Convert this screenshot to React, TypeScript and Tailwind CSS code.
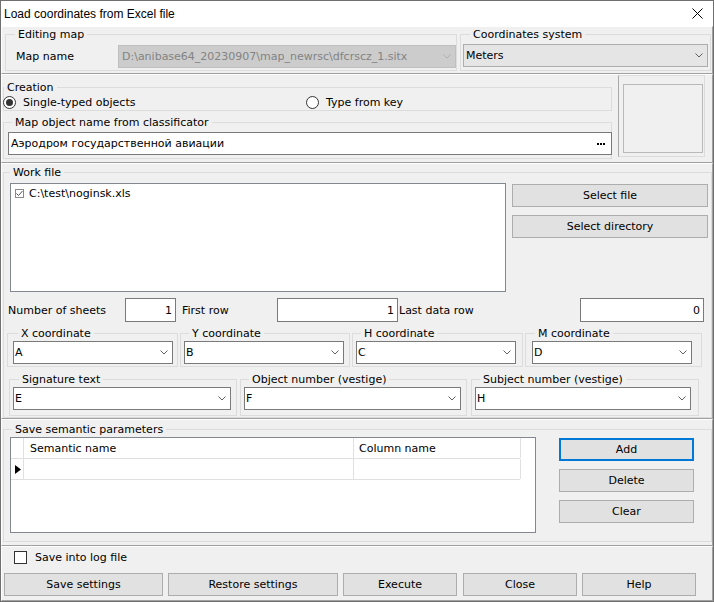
import React from "react";

const PANEL =
  "border border-t-white border-l-white border-r-[#a0a0a0] border-b-[#a0a0a0] shrink-0";

function Chevron({ color = "#606060" }: { color?: string }) {
  return (
    <svg width="8" height="5" viewBox="0 0 8 5" className="shrink-0">
      <polyline points="0.5,0.5 4,4 7.5,0.5" fill="none" stroke={color} strokeWidth="1" />
    </svg>
  );
}

function Group({
  className,
  label,
  labelPos,
  children,
}: {
  className: string;
  label?: string;
  labelPos?: string;
  children?: React.ReactNode;
}) {
  return (
    <div className={`relative border border-[#dcdcdc] shrink-0 ${className}`}>
      {label && (
        <span
          className={`absolute top-[-7px] ${labelPos} bg-[#f0f0f0] px-[3px] leading-[13px] whitespace-nowrap`}
        >
          {label}
        </span>
      )}
      {children}
    </div>
  );
}

function Combo({
  className,
  text,
  variant = "edit",
}: {
  className: string;
  text: string;
  variant?: "edit" | "readonly" | "disabled";
}) {
  const look =
    variant === "disabled"
      ? "bg-[#cccccc] border-[#bfbfbf] text-[#838383] pl-[3px]"
      : variant === "readonly"
      ? "bg-[#e5e5e5] border-[#adadad] text-black pl-[2px]"
      : "bg-white border-[#7a7a7a] text-black pl-[1px]";
  return (
    <div className={`flex items-center justify-between border pr-[4px] shrink-0 ${look} ${className}`}>
      <span className="whitespace-nowrap">{text}</span>
      <Chevron color={variant === "disabled" ? "#b0b0b0" : "#606060"} />
    </div>
  );
}

function Btn({
  className,
  children,
  focused,
}: {
  className: string;
  children: React.ReactNode;
  focused?: boolean;
}) {
  return (
    <div
      className={`flex items-center justify-center h-[23px] bg-[#e1e1e1] shrink-0 ${
        focused ? "border-2 border-[#0078d7]" : "border border-[#adadad]"
      } ${className}`}
    >
      {children}
    </div>
  );
}

function NumEdit({ className, value }: { className: string; value: string }) {
  return (
    <div
      className={`flex items-center justify-end h-[24px] bg-white border border-[#7a7a7a] pr-[3px] shrink-0 ${className}`}
    >
      {value}
    </div>
  );
}

function Radio({ checked }: { checked?: boolean }) {
  return (
    <span className="w-[13px] h-[13px] rounded-full border border-[#333333] bg-white flex items-center justify-center shrink-0">
      {checked && <span className="w-[7px] h-[7px] rounded-full bg-[#333333]" />}
    </span>
  );
}

export default function App() {
  return (
    <div className="w-[714px] h-[602px] border border-[#707070] bg-[#f0f0f0] flex flex-col text-[11px] leading-[13px] text-black [font-family:'DejaVu_Sans',sans-serif] overflow-hidden">
      {/* Title bar */}
      <div className="h-[25px] bg-white flex items-center justify-between pl-[3px] pr-[10px] shrink-0">
        <span className="[font-family:'Liberation_Sans',sans-serif] text-[12px] leading-[14px]">
          Load coordinates from Excel file
        </span>
        <svg width="11" height="11" viewBox="0 0 11 11">
          <path d="M0.5 0.5 L10.5 10.5 M10.5 0.5 L0.5 10.5" stroke="#000" strokeWidth="1" />
        </svg>
      </div>

      {/* Panel 1: editing map / coordinates system */}
      <div className={`${PANEL} h-[48px] flex pt-[7px] pl-[3px] gap-[3px]`}>
        <Group className="w-[452px] h-[37px] pl-[10px] pt-[10px]" label="Editing map" labelPos="left-[9px]">
          <div className="flex items-center">
            <span className="w-[102px] shrink-0">Map name</span>
            <Combo
              className="w-[338px] h-[23px]"
              variant="disabled"
              text="D:\anibase64_20230907\map_newrsc\dfcrscz_1.sitx"
            />
          </div>
        </Group>
        <Group className="w-[251px] h-[37px] pl-[2px] pt-[9px]" label="Coordinates system" labelPos="left-[9px]">
          <Combo className="w-[245px] h-[23px]" variant="readonly" text="Meters" />
        </Group>
      </div>

      {/* Panel 2: creation */}
      <div className={`${PANEL} h-[89px] flex`}>
        <div className="ml-[1px] w-[609px] flex flex-col pt-[12px] shrink-0">
          <Group className="w-[609px] h-[24px] pt-[8px]" label="Creation" labelPos="left-[0px]">
            <div className="flex items-center -ml-[1px]">
              <div className="w-[303px] flex items-center gap-[7px] shrink-0">
                <Radio checked />
                <span>Single-typed objects</span>
              </div>
              <div className="flex items-center gap-[7px]">
                <Radio />
                <span>Type from key</span>
              </div>
            </div>
          </Group>
          <Group
            className="mt-[11px] w-[609px] h-[37px] pl-[4px] pt-[9px]"
            label="Map object name from classificator"
            labelPos="left-[8px]"
          >
            <div className="w-[604px] h-[23px] bg-white border border-[#7a7a7a] flex items-center justify-between pl-[2px] pr-[6px]">
              <span>Аэродром государственной авиации</span>
              <svg width="8" height="2" viewBox="0 0 8 2">
                <rect x="0" y="0" width="2" height="2" fill="#000" />
                <rect x="3" y="0" width="2" height="2" fill="#000" />
                <rect x="6" y="0" width="2" height="2" fill="#000" />
              </svg>
            </div>
          </Group>
        </div>
        <div className="ml-[6px] w-[87px] h-[82px] border border-[#dcdcdc] border-l-[#a9a9a9] shrink-0 pl-[4px] pt-[8px]">
          <div className="w-[80px] h-[69px] border border-[#b9b9b9]" />
        </div>
      </div>

      {/* Panel 3: work file */}
      <div className={`${PANEL} h-[256px] flex flex-col`}>
        <Group className="mt-[8px] ml-[1px] w-[709px] h-[246px] flex flex-col" label="Work file" labelPos="left-[6px]">
          {/* list + buttons */}
          <div className="mt-[10px] ml-[6px] flex">
            <div className="w-[496px] h-[109px] bg-white border border-[#828790] pl-[4px] pt-[3px] shrink-0">
              <div className="flex items-center gap-[5px]">
                <span className="w-[9px] h-[9px] border border-[#8a8a8a] bg-white flex items-center justify-center shrink-0">
                  <svg width="7" height="7" viewBox="0 0 7 7">
                    <polyline points="0.5,3.5 2.5,5.5 6.5,1" fill="none" stroke="#555" strokeWidth="1" />
                  </svg>
                </span>
                <span>C:\test\noginsk.xls</span>
              </div>
            </div>
            <div className="ml-[6px] mt-[1px] flex flex-col gap-[8px]">
              <Btn className="w-[196px]">Select file</Btn>
              <Btn className="w-[196px]">Select directory</Btn>
            </div>
          </div>

          {/* numeric row */}
          <div className="mt-[6px] ml-[4px] flex items-center">
            <span className="w-[117px] shrink-0">Number of sheets</span>
            <NumEdit className="w-[51px]" value="1" />
            <span className="ml-[6px] w-[95px] shrink-0">First row</span>
            <NumEdit className="w-[121px]" value="1" />
            <span className="ml-[1px] w-[181px] shrink-0">Last data row</span>
            <NumEdit className="w-[124px]" value="0" />
          </div>

          {/* coordinate groups */}
          <div className="mt-[11px] ml-[3px] flex">
            <Group className="w-[171px] h-[34px] pt-[7px] pl-[5px]" label="X coordinate" labelPos="left-[10px]">
              <Combo className="w-[160px] h-[23px]" text="A" />
            </Group>
            <Group className="ml-[2px] w-[170px] h-[34px] pt-[7px] pl-[3px]" label="Y coordinate" labelPos="left-[8px]">
              <Combo className="w-[160px] h-[23px]" text="B" />
            </Group>
            <Group className="ml-[2px] w-[171px] h-[34px] pt-[7px] pl-[3px]" label="H coordinate" labelPos="left-[8px]">
              <Combo className="w-[160px] h-[23px]" text="C" />
            </Group>
            <Group className="ml-[2px] w-[177px] h-[34px] pt-[7px] pl-[6px]" label="M coordinate" labelPos="left-[9px]">
              <Combo className="w-[160px] h-[23px]" text="D" />
            </Group>
          </div>

          {/* signature groups */}
          <div className="mt-[12px] ml-[5px] flex">
            <Group className="w-[228px] h-[37px] pt-[7px] pl-[3px]" label="Signature text" labelPos="left-[9px]">
              <Combo className="w-[218px] h-[23px]" text="E" />
            </Group>
            <Group
              className="ml-[3px] w-[227px] h-[37px] pt-[7px] pl-[3px]"
              label="Object number (vestige)"
              labelPos="left-[8px]"
            >
              <Combo className="w-[217px] h-[23px]" text="F" />
            </Group>
            <Group
              className="ml-[4px] w-[228px] h-[37px] pt-[7px] pl-[3px]"
              label="Subject number (vestige)"
              labelPos="left-[8px]"
            >
              <Combo className="w-[216px] h-[23px]" text="H" />
            </Group>
          </div>
        </Group>
      </div>

      {/* Panel 4: semantic parameters */}
      <div className={`${PANEL} h-[127px] flex flex-col`}>
        <Group
          className="mt-[9px] ml-[1px] w-[709px] h-[113px] flex"
          label="Save semantic parameters"
          labelPos="left-[8px]"
        >
          <div className="ml-[6px] mt-[7px] w-[526px] h-[96px] bg-white border border-[#828790] shrink-0 flex flex-col">
            <div className="flex h-[21px] border-b border-[#e0e0e0] w-[509px]">
              <div className="w-[13px] border-r border-[#e0e0e0] shrink-0" />
              <div className="w-[330px] border-r border-[#e0e0e0] shrink-0 flex items-center pl-[6px]">
                Semantic name
              </div>
              <div className="w-[167px] border-r border-[#e0e0e0] shrink-0 flex items-center pl-[5px]">
                Column name
              </div>
            </div>
            <div className="flex h-[21px] border-b border-[#e0e0e0] w-[509px]">
              <div className="w-[13px] border-r border-[#e0e0e0] shrink-0 flex items-center pl-[4px]">
                <svg width="6" height="9" viewBox="0 0 6 9">
                  <polygon points="0,0 6,4.5 0,9" fill="#000" />
                </svg>
              </div>
              <div className="w-[330px] border-r border-[#e0e0e0] shrink-0" />
              <div className="w-[167px] border-r border-[#e0e0e0] shrink-0" />
            </div>
          </div>
          <div className="ml-[23px] mt-[8px] flex flex-col gap-[8px]">
            <Btn className="w-[135px]" focused>
              Add
            </Btn>
            <Btn className="w-[135px]">Delete</Btn>
            <Btn className="w-[135px]">Clear</Btn>
          </div>
        </Group>
      </div>

      {/* Panel 5: bottom */}
      <div className={`${PANEL} h-[55px] flex flex-col`}>
        <div className="mt-[4px] ml-[12px] flex items-center gap-[8px]">
          <span className="w-[13px] h-[13px] border border-[#333333] bg-white shrink-0" />
          <span>Save into log file</span>
        </div>
        <div className="mt-[9px] ml-[2px] flex">
          <Btn className="w-[159px]">Save settings</Btn>
          <Btn className="ml-[5px] w-[170px]">Restore settings</Btn>
          <Btn className="ml-[5px] w-[114px]">Execute</Btn>
          <Btn className="ml-[6px] w-[114px]">Close</Btn>
          <Btn className="ml-[5px] w-[114px]">Help</Btn>
        </div>
      </div>
    </div>
  );
}
